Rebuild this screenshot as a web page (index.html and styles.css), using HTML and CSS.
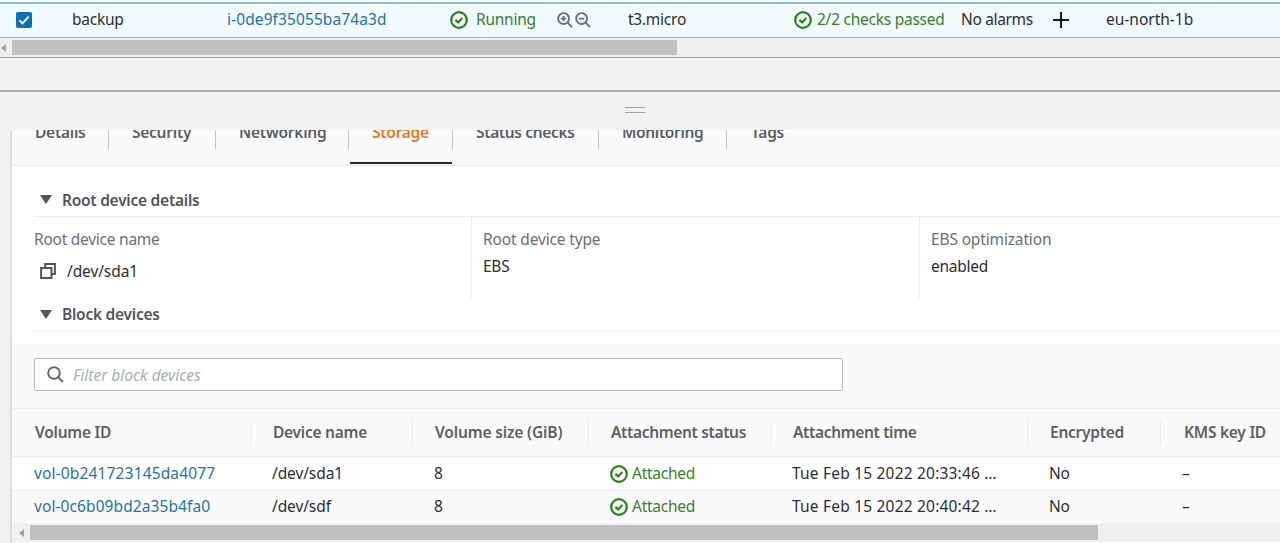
FILE: index.html
```html
<!DOCTYPE html>
<html lang="en">
<head>
<meta charset="utf-8">
<title>Instances</title>
<link rel="stylesheet" href="styles.css">
</head>
<body>
<svg class="defs" width="0" height="0" aria-hidden="true">
  <symbol id="ok" viewBox="0 0 18 18"><circle cx="9" cy="9" r="7.8"/><path d="M5.4 8.9l2.7 2.5 4.3-4.4"/></symbol>
  <symbol id="copy" viewBox="0 0 16 16"><path d="M1.1 4.9h10.4v10H1.1zM5.2 4.9V1.1h9.7v10h-3.4"/></symbol>
</svg>
<section class="instances">
  <div class="instance-row">
    <span class="checkbox"><svg viewBox="0 0 16 16" width="16" height="16"><path d="M3.4 8.4l3.1 3L12.6 4.6"/></svg></span>
    <span class="text">backup</span>
    <a class="text t-id">i-0de9f35055ba74a3d</a>
    <span class="status wide"><svg class="ok"><use href="#ok"/></svg><span class="text">Running</span></span>
    <span class="zooms">
      <svg viewBox="0 0 17 17" width="16" height="16"><circle cx="7" cy="7" r="5.8"/><path d="M11.3 11.3L16 16M4.2 7h5.6M7 4.2v5.6"/></svg><svg viewBox="0 0 17 17" width="16" height="16"><circle cx="7" cy="7" r="5.8"/><path d="M11.3 11.3L16 16M4.2 7h5.6"/></svg>
    </span>
    <span class="text t-type">t3.micro</span>
    <span class="status"><svg class="ok"><use href="#ok"/></svg><span class="text t-check">2/2 checks passed</span></span>
    <span class="text t-alarm">No alarms</span>
    <svg class="plus" viewBox="0 0 16 16" width="16" height="16"><path d="M8 0v16M0 8h16"/></svg>
    <span class="text t-zone">eu-north-1b</span>
  </div>
  <div class="scroll top-scroll"><i class="arrow"></i><i class="thumb"></i></div>
</section>
<div class="gap-band"></div>
<div class="splitter"><i class="grip"></i></div>
<main class="panel">
  <nav class="tabs">
    <a class="tab"><span>Details</span></a>
    <a class="tab"><span>Security</span></a>
    <a class="tab"><span>Networking</span></a>
    <a class="tab active"><span>Storage</span></a>
    <a class="tab"><span class="tight">Status checks</span></a>
    <a class="tab"><span class="tight">Monitoring</span></a>
    <a class="tab"><span>Tags</span></a>
  </nav>
  <section class="root-section">
    <h2><i class="caret"></i><span>Root device details</span></h2>
    <div class="facts">
      <div class="fact"><label>Root device name</label><div class="value copyable"><svg class="copy"><use href="#copy"/></svg><span class="path">/dev/sda1</span></div></div>
      <div class="fact"><label class="loose">Root device type</label><div class="value">EBS</div></div>
      <div class="fact"><label class="loose">EBS optimization</label><div class="value">enabled</div></div>
    </div>
  </section>
  <section class="block-section">
    <h2><i class="caret"></i><span>Block devices</span></h2>
  </section>
  <div class="filter">
    <div class="search"><svg viewBox="0 0 17 17" width="17" height="17"><circle cx="7" cy="7" r="5.8"/><path d="M11 11l5 5"/></svg><span class="placeholder">Filter block devices</span></div>
  </div>
  <div class="row head">
    <span><b>Volume ID</b></span><span><b>Device name</b></span><span><b class="c-size">Volume size (GiB)</b></span><span><b class="tight">Attachment status</b></span><span><b class="tight">Attachment time</b></span><span><b>Encrypted</b></span><span><b>KMS key ID</b></span>
  </div>
  <div class="row">
    <a class="text d-vol">vol-0b241723145da4077</a><span class="text path">/dev/sda1</span><span class="text">8</span><span class="status"><svg class="ok"><use href="#ok"/></svg><span class="text">Attached</span></span><span class="text d-time">Tue Feb 15 2022 20:33:46 …</span><span class="text">No</span><span class="text">–</span>
  </div>
  <div class="row alt">
    <a class="text d-vol2">vol-0c6b09bd2a35b4fa0</a><span class="text path">/dev/sdf</span><span class="text">8</span><span class="status"><svg class="ok"><use href="#ok"/></svg><span class="text">Attached</span></span><span class="text d-time">Tue Feb 15 2022 20:40:42 …</span><span class="text">No</span><span class="text">–</span>
  </div>
  <div class="scroll bottom-scroll"><i class="arrow"></i><i class="thumb"></i></div>
</main>
</body>
</html>
```
FILE: styles.css
```css
* { box-sizing: border-box; }
body { margin: 0; height: 543px; overflow: hidden; background: #f1f3f3; color: #2b2f34; font: 15.5px/20px "Noto Sans", sans-serif; letter-spacing: -.25px; }
svg { display: block; flex: none; fill: none; stroke: currentColor; stroke-width: 2; overflow: visible; }
span, a, b, label { white-space: nowrap; }
a { color: #2473b0; }
.defs { position: absolute; }
.ok { width: 18px; height: 18px; color: #2c8418; stroke-width: 2.2; }
.status { display: flex; align-items: center; gap: 4px; color: #39802a; }
.status.wide { gap: 8px; }
.text { padding-bottom: 2px; }
.path { letter-spacing: -.1px; }
.tight { letter-spacing: -.34px; }
.loose { letter-spacing: -.15px; }

.instances { padding-top: 2px; background: #fff; }
.instance-row { display: grid; grid-template-columns: 56px 155px 223px 107px 70px 167px 167px 92px 53px 174px; align-items: center; height: 36px; padding: 0 0 1px 16px; background: #f1faff; border: solid #84c0d6; border-width: 2px 0 1px; }
.checkbox { width: 16px; height: 16px; border-radius: 2px; background: #0873bd; color: #fff; }
.zooms { display: flex; gap: 2px; color: #697077; }
.plus { color: #16191f; }
.t-id { letter-spacing: .1px; }
.t-type { padding-left: 1px; }
.t-check { padding-left: 1px; }
.t-alarm { letter-spacing: -.35px; }
.t-zone { letter-spacing: 0; }

.scroll { display: flex; align-items: center; background: #f0f0f0; }
.arrow { width: 0; height: 0; border: solid transparent; border-width: 4px 5px 4px 0; border-right-color: #a0a0a0; }
.thumb { height: 15px; background: #c1c1c1; }
.top-scroll { height: 19px; padding-left: 1px; }
.top-scroll .thumb { width: 665px; margin-left: 6px; }
.gap-band { height: 35px; border: solid #999c9c; border-width: 1px 0 2px; border-bottom-color: #adb0b0; }
.splitter { height: 38px; padding-top: 15px; }
.grip { display: block; width: 20px; height: 6px; margin-left: 625px; border: solid #9fa1a1; border-width: 1px 0; }

.panel { height: 413px; margin-left: 10px; border-left: 2px solid #dadddd; background: #fff; overflow: hidden; }
.tabs { display: flex; height: 36px; overflow: hidden; background: #fafafa; border-bottom: 1px solid #e9ebeb; }
.tab { height: 35px; font-weight: 600; color: #5a6065; }
.tab span { display: block; height: 19px; padding-left: 23px; border-right: 1px solid #c2c5c5; line-height: 4px; }
.tab:nth-child(1) { width: 97px; }
.tab:nth-child(2) { width: 107px; }
.tab:nth-child(3) { width: 133px; }
.tab:nth-child(4) { width: 104px; }
.tab:nth-child(5) { width: 146px; }
.tab:nth-child(6) { width: 128px; }
.tab:last-child span { border: 0; padding-left: 24px; }
.tab.active { color: #e47925; background: linear-gradient(#24282d, #24282d) 1px 32px / 102px 2px no-repeat; }

h2 { display: flex; align-items: center; gap: 10px; height: 35px; margin: 0; padding: 1px 0 0 6px; border-bottom: 1px solid #eaeded; font-size: 15.5px; font-weight: 600; color: #50565b; }
.caret { border: solid transparent; border-width: 9px 6px 0; border-top-color: #50565b; }
.root-section { padding: 16px 0 0 22px; }
.facts { display: grid; grid-template-columns: 437px 448px 1fr; height: 81px; }
.fact { padding-top: 12px; }
.fact + .fact { padding-left: 11px; border-left: 1px solid #eaeded; }
label { display: block; color: #6b7073; }
.value { margin-top: 7px; }
.copyable { display: flex; align-items: center; gap: 11px; margin-top: 12px; padding-left: 6px; }
.copy { width: 16px; height: 16px; color: #50565b; }
.block-section { padding-left: 22px; }
.block-section h2 { height: 34px; padding-top: 0; padding-bottom: 1px; }

.filter { height: 65px; margin-top: 11px; padding: 15px 22px; background: #fafafa; }
.search { display: flex; align-items: center; gap: 9px; width: 809px; height: 33px; padding-left: 12px; border: 1px solid #b6baba; border-radius: 2px; background: #fff; color: #62686b; }
.placeholder { letter-spacing: -.02px; font-style: italic; color: #a6b1b1; }
.row { display: grid; grid-template-columns: 238px 162px 176px 182px 257px 133px 1fr; align-items: center; height: 33px; padding-left: 22px; }
.head { height: 49px; background: #fafafa; border: solid #eaeded; border-width: 1px 0; color: #5a6065; }
.head span { height: 24px; padding-left: 1px; line-height: 22px; }
.head span + span { margin-left: -22px; padding-left: 22px; border-left: 1px solid #eaeded; }
.head span:last-child { padding-left: 23px; }
.head b { font-weight: 600; }
.c-size { letter-spacing: -.15px; }
.d-vol { letter-spacing: .15px; }
.d-vol2 { letter-spacing: .09px; }
.d-time { letter-spacing: .2px; }
.alt { background: #fafafa; border-top: 1px solid #eaeded; }
.bottom-scroll { height: 19px; padding-left: 7px; }
.bottom-scroll .thumb { width: 1068px; margin-left: 6px; }
```
